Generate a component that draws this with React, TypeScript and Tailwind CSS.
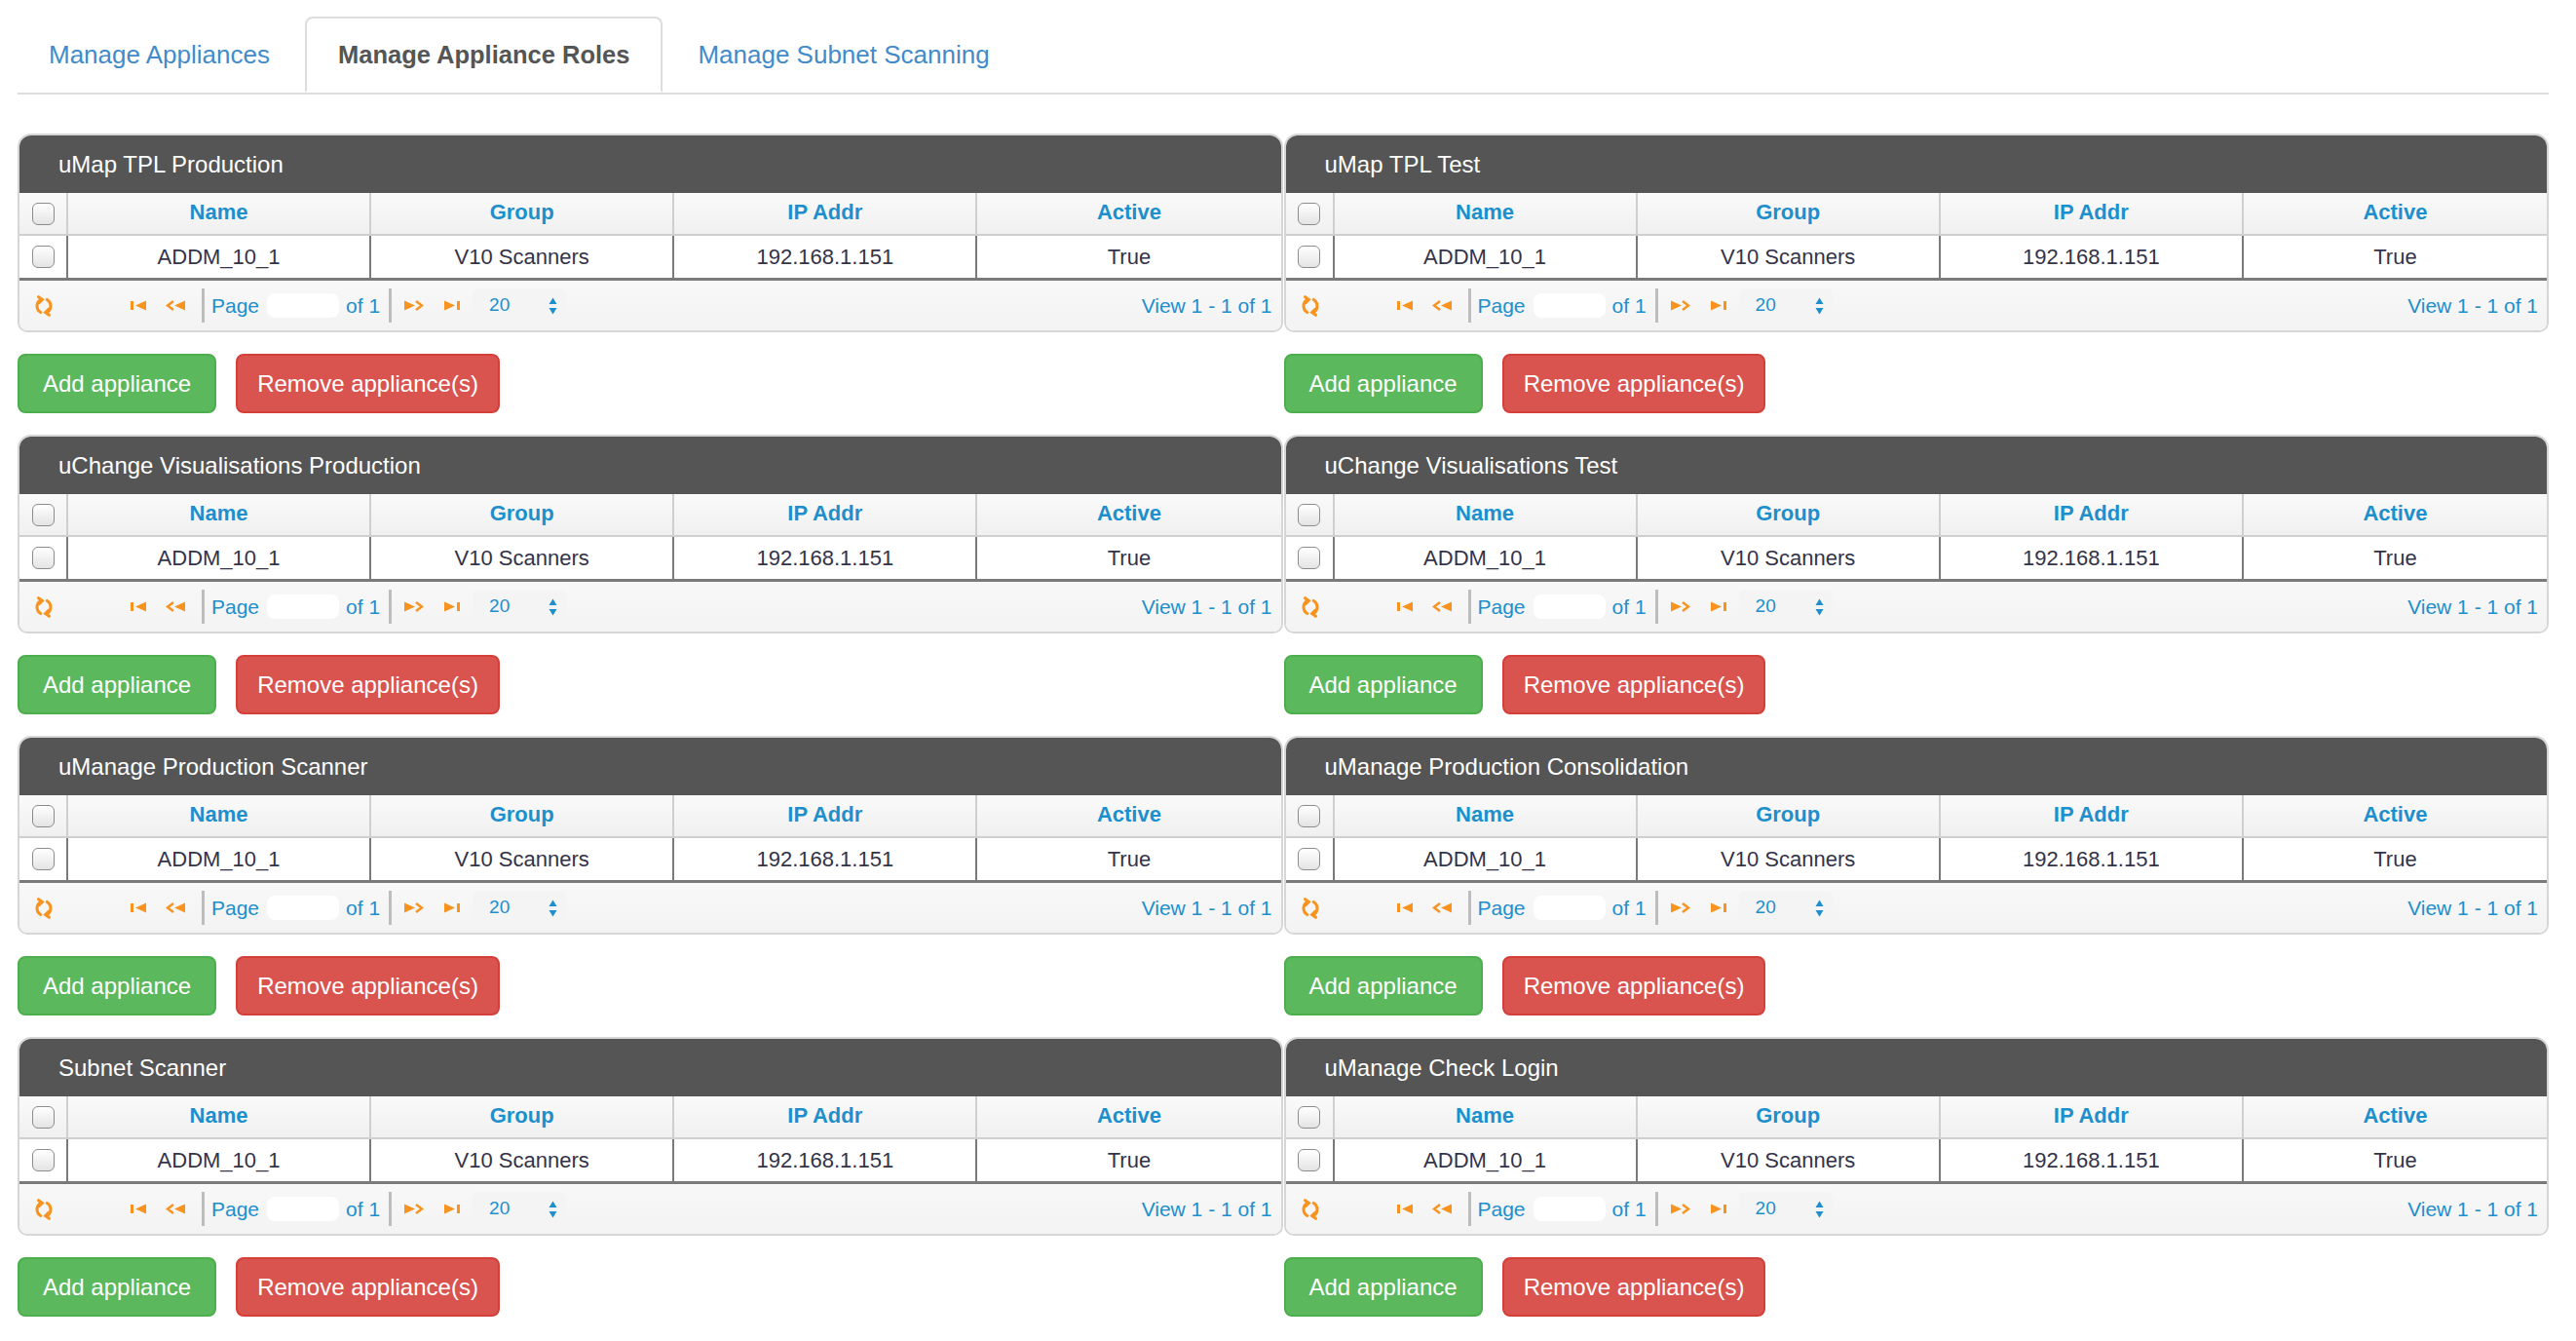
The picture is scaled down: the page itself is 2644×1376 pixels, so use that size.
import React from "react";

const ORANGE = "#f7931e";

const roles: [string, string][] = [
  ["uMap TPL Production", "uMap TPL Test"],
  ["uChange Visualisations Production", "uChange Visualisations Test"],
  ["uManage Production Scanner", "uManage Production Consolidation"],
  ["Subnet Scanner", "uManage Check Login"],
];

const Checkbox = () => (
  <div className="w-[23px] h-[23px] rounded-[6px] border-[1.5px] border-[#8c8c8c] bg-linear-to-b from-white to-[#e4e4e4] shadow-[inset_0_1px_1px_rgba(255,255,255,0.9)]" />
);

const RefreshIcon = () => (
  <svg width="22" height="24" viewBox="0 0 20 22" fill="none" stroke={ORANGE} strokeWidth="2.8" strokeLinecap="round">
    <path d="M7 5 A7 7 0 0 0 7 17" />
    <path d="M13 17 A7 7 0 0 0 13 5" />
    <path d="M5 2.5 L8.5 5 L5.5 8" />
    <path d="M15 19.5 L11.5 17 L14.5 14" />
  </svg>
);

const FirstIcon = () => (
  <svg width="19" height="11" viewBox="0 0 19 11" fill={ORANGE}>
    <rect x="1" y="1" width="3" height="9" />
    <polygon points="6,5.5 17,0.5 17,10.5" />
  </svg>
);

const PrevIcon = () => (
  <svg width="22" height="11" viewBox="0 0 22 11" fill={ORANGE}>
    <polyline points="8,1 2,5.5 8,10" fill="none" stroke={ORANGE} strokeWidth="2.4" />
    <polygon points="9,5.5 20,0.5 20,10.5" />
  </svg>
);

const NextIcon = () => (
  <svg width="22" height="11" viewBox="0 0 22 11" fill={ORANGE}>
    <polygon points="2,0.5 13,5.5 2,10.5" />
    <polyline points="14,1 20,5.5 14,10" fill="none" stroke={ORANGE} strokeWidth="2.4" />
  </svg>
);

const LastIcon = () => (
  <svg width="19" height="11" viewBox="0 0 19 11" fill={ORANGE}>
    <polygon points="2,0.5 13,5.5 2,10.5" />
    <rect x="15" y="1" width="3" height="9" />
  </svg>
);

const SelectArrows = () => (
  <svg width="9" height="18" viewBox="0 0 9 18" fill="#1d8fcc">
    <polygon points="4.5,0.5 8.5,7 0.5,7" />
    <polygon points="0.5,11 8.5,11 4.5,17.5" />
  </svg>
);

const Pager = () => (
  <div className="flex items-center h-[51px] bg-linear-to-b from-[#f8f8f8] to-[#f3f3f3] text-[21px] text-[#1d8fcc]">
    <div className="ml-[14px] flex items-center">
      <RefreshIcon />
    </div>
    <div className="ml-[77px] flex items-center">
      <FirstIcon />
      <div className="ml-[18px] flex items-center">
        <PrevIcon />
      </div>
      <div className="ml-[15px] w-[3px] h-[35px] bg-[#bdbdbd]" />
      <span className="ml-[7px]">Page</span>
      <div className="ml-[8px] w-[74px] h-[25px] rounded-[8px] bg-white" />
      <span className="ml-[7px]">of 1</span>
      <div className="ml-[9px] w-[3px] h-[35px] bg-[#bdbdbd]" />
      <div className="ml-[11px] flex items-center">
        <NextIcon />
      </div>
      <div className="ml-[19px] flex items-center">
        <LastIcon />
      </div>
      <div className="ml-[12px] w-[96px] h-[35px] rounded-[6px] bg-[#f4f4f4] flex items-center justify-between pl-[17px] pr-[9px]">
        <span className="text-[19px]">20</span>
        <SelectArrows />
      </div>
    </div>
    <div className="ml-auto pr-[9px]">View 1 - 1 of 1</div>
  </div>
);

const headers = ["Name", "Group", "IP Addr", "Active"];
const row = ["ADDM_10_1", "V10 Scanners", "192.168.1.151", "True"];

const RolePanel = ({ title }: { title: string }) => (
  <div>
    <div className="border-2 border-[#d6d6d6] rounded-t-[14px] rounded-b-[10px] overflow-hidden bg-white">
      <div className="h-[59px] bg-[#555555] text-white text-[24px] pl-[40px] flex items-center">
        {title}
      </div>
      <div className="grid grid-cols-[50px_1fr_1fr_1fr_1fr] h-[44px] bg-linear-to-b from-[#fafafa] to-[#f0f0f0] border-b-2 border-[#cfcfcf]">
        <div className="flex items-center justify-center border-r-2 border-[#cfcfcf]">
          <Checkbox />
        </div>
        {headers.map((h, i) => (
          <div
            key={h}
            className={`flex items-center justify-center font-bold text-[22px] text-[#1d8fcc] pb-[3px] ${i < 3 ? "border-r-2 border-[#cfcfcf]" : ""}`}
          >
            {h}
          </div>
        ))}
      </div>
      <div className="grid grid-cols-[50px_1fr_1fr_1fr_1fr] h-[46px] bg-white border-b-[3px] border-[#7a7a7a]">
        <div className="flex items-center justify-center border-r-2 border-[#7a7a7a]">
          <Checkbox />
        </div>
        {row.map((c, i) => (
          <div
            key={c}
            className={`flex items-center justify-center text-[22px] text-[#33334a] ${i < 3 ? "border-r-2 border-[#7a7a7a]" : ""}`}
          >
            {c}
          </div>
        ))}
      </div>
      <Pager />
    </div>
    <div className="flex gap-[20px] mt-[22px] mb-[22px]">
      <button className="h-[61px] px-[24px] rounded-[8px] border-2 border-[#4cae4c] bg-[#5cb85c] text-white text-[24px]">
        Add appliance
      </button>
      <button className="h-[61px] px-[20px] rounded-[8px] border-2 border-[#d43f3a] bg-[#d9534f] text-white text-[24px]">
        Remove appliance(s)
      </button>
    </div>
  </div>
);

export default function App() {
  return (
    <div className="w-[2644px] min-h-[1376px] bg-white pl-[18px] pr-[28px] pt-[17px] font-['Liberation_Sans',Arial,sans-serif]">
      <ul className="flex border-b-2 border-[#dddddd] text-[26px]">
        <li className="px-[32px] h-[78px] flex items-center text-[#428bca] mr-[4px]">Manage Appliances</li>
        <li className="px-[32px] h-[78px] flex items-center text-[#555555] font-bold text-[25.5px] bg-white border-2 border-[#dddddd] border-b-white rounded-t-[8px] -mb-[2px] mr-[4px]">
          Manage Appliance Roles
        </li>
        <li className="px-[32px] h-[78px] flex items-center text-[#428bca]">Manage Subnet Scanning</li>
      </ul>
      <div className="mt-[40px] grid grid-cols-2 gap-x-[1px]">
        {roles.map(([a, b]) => (
          <React.Fragment key={a}>
            <RolePanel title={a} />
            <RolePanel title={b} />
          </React.Fragment>
        ))}
      </div>
    </div>
  );
}
